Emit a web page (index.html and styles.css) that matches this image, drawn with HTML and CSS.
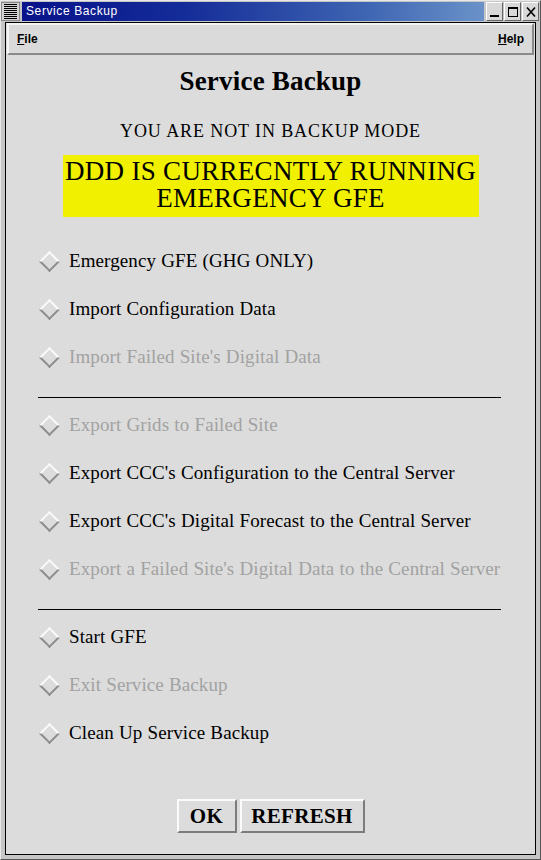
FILE: index.html
```html
<!DOCTYPE html>
<html>
<head>
<meta charset="utf-8">
<link rel="stylesheet" href="styles.css">
</head>
<body>
<div class="window">
  <div class="titlebar">
    <div class="winmenu"><span></span><span></span><span></span><span></span><span></span><span></span><span></span><span></span></div>
    <div class="wintitle">Service Backup</div>
    <div class="winbtns">
      <div class="wbtn"><svg width="12" height="12" viewBox="0 0 12 12"><rect x="1" y="9" width="9" height="2" fill="#000"/></svg></div>
      <div class="wbtn"><svg width="12" height="12" viewBox="0 0 12 12"><rect x="1.5" y="1.5" width="9" height="9" fill="none" stroke="#000" stroke-width="1"/><rect x="1" y="1" width="10" height="2" fill="#000"/></svg></div>
      <div class="wbtn"><svg width="12" height="12" viewBox="0 0 12 12"><path d="M2 1.5 L10 10.5 M10 1.5 L2 10.5" stroke="#000" stroke-width="1.6"/></svg></div>
    </div>
  </div>
  <div class="client">
    <div class="menubar">
      <span class="menu"><u>F</u>ile</span>
      <span class="menu"><u>H</u>elp</span>
    </div>
    <div class="content">
      <h1 class="title">Service Backup</h1>
      <div class="mode">YOU ARE NOT IN BACKUP MODE</div>
      <div class="alert">DDD IS CURRECNTLY RUNNING<br>EMERGENCY GFE</div>
      <div class="options">
        <div class="opt"><i class="dia"></i><span>Emergency GFE (GHG ONLY)</span></div>
        <div class="opt"><i class="dia"></i><span>Import Configuration Data</span></div>
        <div class="opt off"><i class="dia"></i><span>Import Failed Site's Digital Data</span></div>
        <div class="sep"></div>
        <div class="opt off"><i class="dia"></i><span>Export Grids to Failed Site</span></div>
        <div class="opt"><i class="dia"></i><span>Export CCC's Configuration to the Central Server</span></div>
        <div class="opt"><i class="dia"></i><span>Export CCC's Digital Forecast to the Central Server</span></div>
        <div class="opt off"><i class="dia"></i><span>Export a Failed Site's Digital Data to the Central Server</span></div>
        <div class="sep"></div>
        <div class="opt"><i class="dia"></i><span>Start GFE</span></div>
        <div class="opt off"><i class="dia"></i><span>Exit Service Backup</span></div>
        <div class="opt"><i class="dia"></i><span>Clean Up Service Backup</span></div>
      </div>
      <div class="buttons">
        <div class="btn ok">OK</div>
        <div class="btn refresh">REFRESH</div>
      </div>
    </div>
  </div>
</div>
</body>
</html>
```
FILE: styles.css
```css
html, body { margin: 0; padding: 0; }
body { width: 541px; height: 860px; overflow: hidden; background: #c4c4c4; }
.window {
  width: 541px; height: 860px; box-sizing: border-box;
  background: #c6c6c6;
  border-top: 1px solid #e8e8e8; border-left: 1px solid #e8e8e8;
  border-right: 1px solid #555; border-bottom: 1px solid #555;
  display: flex; flex-direction: column;
}
.titlebar {
  height: 19px; margin: 1px 0 0 0;
  display: flex; align-items: stretch;
}
.winmenu {
  width: 19px; background: #d4d4d4;
  border: 1px solid #888; box-sizing: border-box;
  display: flex; flex-direction: column; justify-content: center; gap: 1px;
  padding: 0 2px;
}
.winmenu span { display: block; height: 1px; background: #000; }
.wintitle {
  flex: 1; margin-left: 2px;
  background: linear-gradient(to right, #08128a 0%, #142c98 35%, #3f66b3 75%, #6a92c8 100%);
  color: #fff; font-family: "Liberation Sans", Arial, sans-serif; font-size: 12px;
  line-height: 19px; padding-left: 4px; letter-spacing: 0.6px;
}
.winbtns { display: flex; gap: 1px; margin-left: 2px; margin-right: 1px; }
.wbtn {
  width: 17px; height: 19px; box-sizing: border-box;
  background: #d8d8d8;
  border-top: 1px solid #fff; border-left: 1px solid #fff;
  border-right: 1px solid #666; border-bottom: 1px solid #666;
  display: flex; align-items: center; justify-content: center;
}
.client {
  flex: 1; margin: 1px 4px 4px 4px;
  border: 1px solid #000;
  background: #dcdcdc;
  display: flex; flex-direction: column;
}
.menubar {
  height: 32px; box-sizing: border-box; margin: 0 1px 0 1px;
  background: #dadada;
  border-top: 2px solid #f4f4f4; border-left: 2px solid #f4f4f4;
  border-right: 2px solid #8a8a8a; border-bottom: 2px solid #8a8a8a;
  display: flex; justify-content: space-between; align-items: center;
  padding: 0 8px 1px 8px;
  font-family: "Liberation Sans", Arial, sans-serif; font-weight: bold; font-size: 12px;
  color: #000;
}
.content { display: flex; flex-direction: column; align-items: center; }
.title {
  margin: 11px 0 0 0; font-family: "Liberation Serif", "Times New Roman", serif;
  font-weight: bold; font-size: 27px; line-height: 30px; color: #000;
  letter-spacing: 0.2px;
}
.mode {
  margin-top: 25px; font-family: "Liberation Serif", "Times New Roman", serif;
  font-size: 18px; line-height: 20px; color: #000; letter-spacing: 0.9px;
}
.alert {
  margin-top: 14px; width: 416px; height: 62px; box-sizing: border-box;
  background: #f0f000; text-align: center;
  font-family: "Liberation Serif", "Times New Roman", serif;
  font-size: 27px; line-height: 27px; padding-top: 3px; color: #000;
  letter-spacing: 0.3px;
}
.options { align-self: stretch; margin-top: 20px; display: flex; flex-direction: column; }
.opt {
  height: 48px; display: flex; align-items: center;
  padding-left: 33px;
  font-family: "Liberation Serif", "Times New Roman", serif; font-size: 19px; color: #000;
  letter-spacing: 0.1px; word-spacing: 0.3px;
}
.opt.off { color: #a2a2a2; }
.dia {
  width: 15px; height: 15px; box-sizing: border-box; margin: 0 12px 0 3px;
  transform: rotate(45deg);
  border-top: 2px solid #fafafa; border-left: 2px solid #fafafa;
  border-right: 2px solid #8c8c8c; border-bottom: 2px solid #8c8c8c;
}
.sep {
  height: 1px; background: #000; margin: 16px 0 3px 32px; width: 463px;
}
.buttons { display: flex; gap: 3px; margin-top: 42px; }
.btn {
  height: 34px; box-sizing: border-box;
  background: #dcdcdc;
  border-top: 2px solid #fbfbfb; border-left: 2px solid #fbfbfb;
  border-right: 2px solid #7c7c7c; border-bottom: 2px solid #7c7c7c;
  font-family: "Liberation Serif", "Times New Roman", serif; font-weight: bold;
  font-size: 21px; line-height: 30px; text-align: center; color: #000;
  letter-spacing: 0.3px;
}
.ok { width: 60px; }
.refresh { width: 125px; }
```
